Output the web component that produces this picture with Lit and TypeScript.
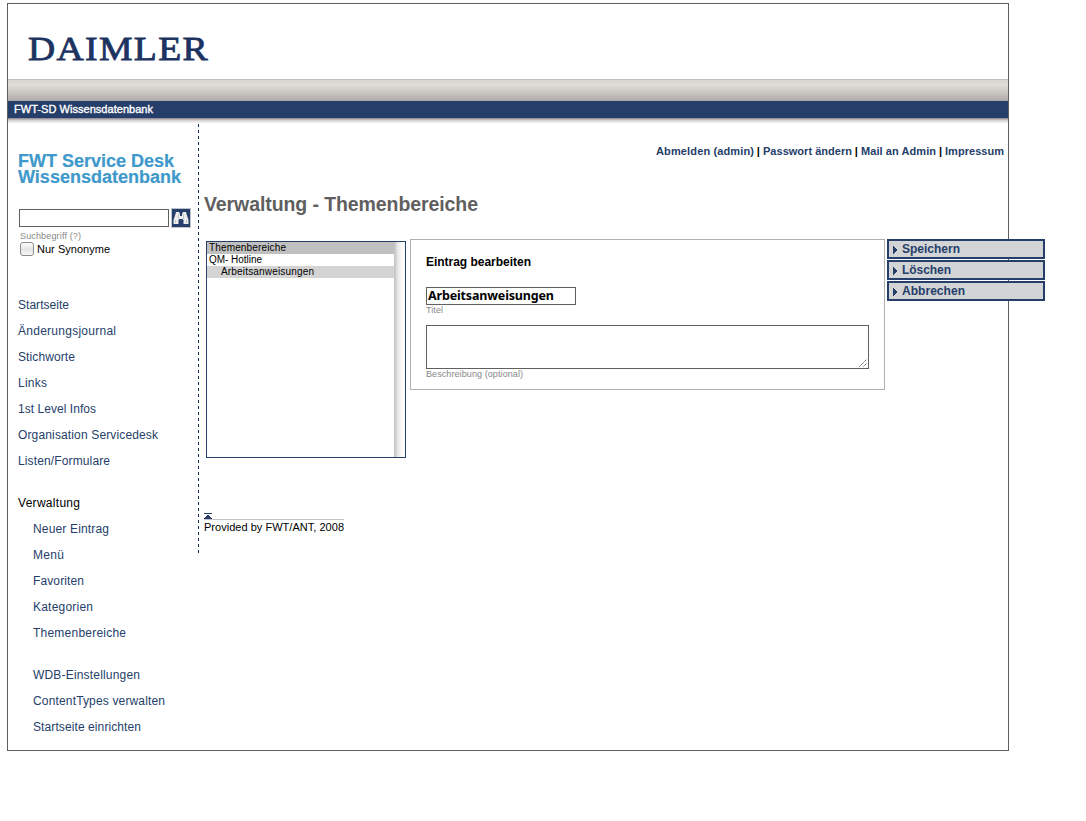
import { LitElement, html, css, svg } from "lit";
import { customElement } from "lit/decorators.js";

const MAIN: [string, number][] = [["Startseite", 51], ["Änderungsjournal", 98], ["Stichworte", 57], ["Links", 29], ["1st Level Infos", 78], ["Organisation Servicedesk", 140], ["Listen/Formulare", 92]];
const ADMIN: [string, number][] = [["Neuer Eintrag", 76], ["Menü", 31], ["Favoriten", 51], ["Kategorien", 60], ["Themenbereiche", 93]];
const SETUP: [string, number][] = [["WDB-Einstellungen", 107], ["ContentTypes verwalten", 132], ["Startseite einrichten", 108]];

@customElement("app-root")
export class AppRoot extends LitElement {
  static styles = css`
    :host { display: block; height: 821px; overflow: hidden; background: #fff; font-family: "Liberation Sans", Arial, sans-serif; color: #000; }
    * { box-sizing: border-box; }
    .page { margin: 3px 0 0 7px; width: 1002px; height: 748px; border: 1px solid #5f5f5f; }
    .brand { height: 75px; padding: 23px 0 0 14px; }
    .brand svg { display: block; }
    .silver { height: 22px; border-top: 1px solid #c4c1bd; background: linear-gradient(#d8d4d0 0, #dfdbd7 25%, #b2aeab 95%, #a5a09c 100%); }
    .bar { height: 17px; background: #253e6a; color: #fff; font-size: 11px; line-height: 17px; padding-left: 6px; }
    .bar text { stroke: #fff; stroke-width: .35px; }
    .shade { height: 5px; background: linear-gradient(#81829a 0, #bdb5b4 30%, #e3e0df 60%, #f4f5f5 100%); }
    .body { display: flex; }
    .side { flex: none; width: 190px; padding: 29px 0 0 10px; }
    .title { margin: 0; font-size: 18px; line-height: 16px; color: #4099cb; font-weight: bold; }
    .title text { stroke: #4099cb; stroke-width: .2px; }
    .search { display: flex; margin: 24px 0 0 1px; gap: 2px; }
    .field { width: 150px; height: 18px; border: 1px solid #5f5f5f; margin-top: 1px; }
    .hint { color: #888; font-size: 9px; line-height: 10px; }
    .search + .hint { margin: 3px 0 0 2px; }
    .check { display: flex; align-items: center; font-size: 11px; height: 15px; gap: 3px; margin-left: 2px; }
    .box { width: 14px; height: 14px; border: 1px solid #8b8b8b; border-radius: 3px; background: linear-gradient(#fff, #e4e4e4 50%, #f8f8f8); }
    .nav { list-style: none; padding: 0; margin: 36px 0 0; font-size: 12px; line-height: 26px; color: #253e6a; }
    .group { color: #000; margin-top: 16px; }
    .sub { padding-left: 15px; }
    .gap { margin-top: 16px; }
    .rule { flex: none; width: 1px; height: 430px; background: repeating-linear-gradient(#132b50 0 3px, transparent 3px 6px); background-position: 0 1px; }
    .main { flex: none; width: 845px; padding-left: 5px; }
    .top { display: flex; justify-content: flex-end; gap: 3px; width: 800px; font-size: 11px; font-weight: bold; line-height: 14px; padding-top: 21px; color: #000; white-space: nowrap; }
    .link { color: #253e6a; }
    h1 { margin: 33px 0 0; font-size: 19.5px; line-height: 26px; color: #5f5f5f; }
    .row { display: flex; margin-top: 22px; }
    .list { flex: none; width: 200px; height: 217px; margin: 2px 4px 0 2px; border: 1px solid #253e6a; display: flex; }
    .options { flex: 1; font-size: 10px; line-height: 12px; }
    .option { padding-left: 2px; height: 12px; }
    .chosen { background: #c0c0c0; }
    .option.child { padding-left: 14px; background: #d4d4d4; }
    .track { width: 11px; background: linear-gradient(90deg, #bfbfbf, #e8e8e8 35%, #fafafa 70%, #fff); }
    .form { flex: none; width: 475px; height: 151px; border: 1px solid #b0b0b0; padding: 15px; }
    .heading { font-size: 12px; font-weight: bold; line-height: 14px; }
    .input { width: 150px; height: 18px; border: 1px solid #5f5f5f; margin-top: 18px; padding-left: 1px; font-family: "Noto Sans", "DejaVu Sans", sans-serif; font-size: 12.5px; font-weight: bold; line-height: 16px; }
    .area { width: 443px; height: 44px; border: 1px solid #5f5f5f; margin-top: 10px; display: flex; justify-content: flex-end; align-items: flex-end; }
    .actions { margin-left: 2px; display: flex; flex-direction: column; gap: 1px; }
    .action { width: 158px; height: 20px; border: 2px solid #253e6a; background: #d2d4d5; color: #253e6a; font-size: 12px; font-weight: bold; line-height: 16px; display: flex; gap: 5px; padding-left: 4px; }
    .arrow { margin-top: 5px; }
    .foot { margin-top: 55px; width: 140px; font-size: 11px; }
    .credit { border-top: 1px solid #c4c4c4; line-height: 15px; white-space: nowrap; }
    .up { display: block; }
    .fit { display: block; overflow: visible; }
  `;

  /* Single line of text set to a fixed measure. */
  fit(text: string, width: number, height: number, base: number) {
    return html`<svg class="fit" width=${width} height=${height}>${svg`<text x="0" y=${base} textLength=${width} fill="currentColor">${text}</text>`}</svg>`;
  }

  items(list: [string, number][], cls = "") {
    return list.map(([t, w], i) => html`<li class="${cls} ${cls && i === 0 && list === SETUP ? "gap" : ""}">${this.fit(t, w, 26, 17)}</li>`);
  }

  action(text: string, width: number) {
    return html`<div class="action"><svg class="arrow" width="4" height="8" shape-rendering="crispEdges"><path d="M0 0h1v1h1v1h1v1h1v2h-1v1h-1v1h-1v1h-1z" fill="#253e6a"/></svg>${this.fit(text, width, 16, 12)}</div>`;
  }

  render() {
    return html`
      <div class="page">
        <div class="brand"><svg width="200" height="45"><text x="6" y="33" textLength="181" lengthAdjust="spacingAndGlyphs" letter-spacing="1.2" font-family="Liberation Serif, serif" font-size="34.5" fill="#1c3360" stroke="#1c3360" stroke-width=".8">DAIMLER</text></svg></div>
        <div class="silver"></div>
        <div class="bar">${this.fit("FWT-SD Wissensdatenbank", 139, 17, 12)}</div>
        <div class="shade"></div>
        <div class="body">
          <div class="side">
            <div class="title">${this.fit("FWT Service Desk", 156, 16, 15)}${this.fit("Wissensdatenbank", 163, 16, 15)}</div>
            <div class="search"><div class="field"></div>
              <svg width="20" height="20" viewBox="0 0 20 20"><path fill="#bfc3cc" d="M0 0h20v20H0z"/><path fill="#253e6a" d="M1 1h18v18H1z"/><path fill="#ececec" d="M5 4h3l1 2v2h2V6l1-2h3l.5 2 2 6v4h-5v-4l-1-1h-3l-1 1v4h-5v-4l2-6z"/><path d="M7.500 6v5M12.500 6v5M4.500 12v3M15.500 12v3" stroke="#c3c6cb" stroke-width="1" fill="none"/></svg>
            </div>
            <div class="hint">${this.fit("Suchbegriff (?)", 61, 10, 8)}</div>
            <div class="check"><span class="box"></span>${this.fit("Nur Synonyme", 73, 15, 12)}</div>
            <ul class="nav">
              ${this.items(MAIN)}
              <li class="group">${this.fit("Verwaltung", 62, 26, 17)}</li>
              ${this.items(ADMIN, "sub")}
              ${this.items(SETUP, "sub")}
            </ul>
          </div>
          <div class="rule"></div>
          <div class="main">
            <div class="top"><span class="link">${this.fit("Abmelden (admin)", 98, 14, 11)}</span><span>|</span><span class="link">${this.fit("Passwort ändern", 89, 14, 11)}</span><span>|</span><span class="link">${this.fit("Mail an Admin", 75, 14, 11)}</span><span>|</span><span class="link">${this.fit("Impressum", 59, 14, 11)}</span></div>
            <h1>${this.fit("Verwaltung - Themenbereiche", 274, 26, 20)}</h1>
            <div class="row">
              <div class="list">
                <div class="options">
                  <div class="option chosen">${this.fit("Themenbereiche", 77, 12, 9)}</div>
                  <div class="option">${this.fit("QM- Hotline", 53, 12, 9)}</div>
                  <div class="option child">${this.fit("Arbeitsanweisungen", 93, 12, 9)}</div>
                </div>
                <div class="track"></div>
              </div>
              <div class="form">
                <div class="heading">${this.fit("Eintrag bearbeiten", 105, 14, 11)}</div>
                <div class="input">${this.fit("Arbeitsanweisungen", 126, 16, 12)}</div>
                <div class="hint">${this.fit("Titel", 17, 10, 8)}</div>
                <div class="area"><svg width="10" height="10"><path d="M1.500 8.500l7-7M5.500 8.500l3-3" stroke="#555" stroke-dasharray="1.400 .5" fill="none"/></svg></div>
                <div class="hint">${this.fit("Beschreibung (optional)", 97, 10, 8)}</div>
              </div>
              <div class="actions">${this.action("Speichern", 58)}${this.action("Löschen", 49)}${this.action("Abbrechen", 63)}</div>
            </div>
            <div class="foot">
              <svg class="up" width="8" height="6" shape-rendering="crispEdges"><path d="M0 0h8v1H0zM3 2h2v1h1v1h1v1h1v1H0V5h1V4h1V3h1z" fill="#253e6a"/></svg>
              <div class="credit">${this.fit("Provided by FWT/ANT, 2008", 140, 15, 11)}</div>
            </div>
          </div>
        </div>
      </div>`;
  }
}
